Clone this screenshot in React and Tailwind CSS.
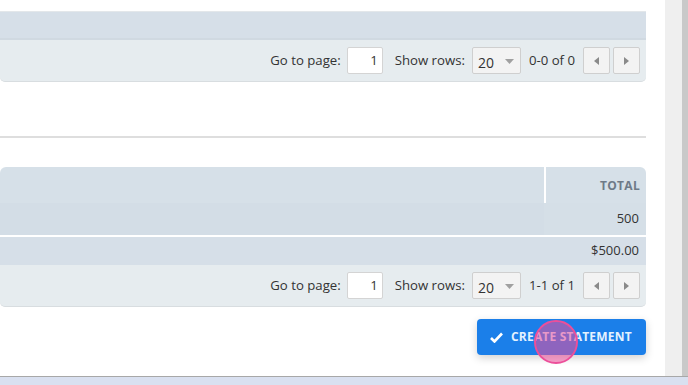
import React from 'react';

function Pager({ range }) {
  return (
    <div className="h-[42px] bg-[#e6ecef] rounded-b-[5px] border-b border-[#d8dde0] flex items-center justify-end pr-[6px] text-[13.2px] text-[#333]">
      <span className="mr-[6px]">Go to page:</span>
      <div className="w-[36px] h-[27px] bg-white border border-[#d4d4d4] rounded-[2px] flex items-center justify-end pr-[4px]">1</div>
      <span className="ml-[12px] mr-[7px]">Show rows:</span>
      <div className="w-[49px] h-[27px] bg-[#f3f3f3] border border-[#cfcfcf] rounded-[2px] flex items-center pl-[5px] pt-[3px] text-[14px]">
        20
        <svg className="ml-auto mr-[6px] -mt-[2px]" width="9" height="5" viewBox="0 0 9 5"><path d="M0 0h9L4.5 5z" fill="#a0a0a0" /></svg>
      </div>
      <span className="ml-[8px] mr-[8px]">{range}</span>
      <div className="w-[27px] h-[27px] bg-[#f3f3f3] border border-[#cfcfcf] rounded-[2px] flex items-center justify-center">
        <svg width="5" height="8" viewBox="0 0 5 8"><path d="M5 0v8L0 4z" fill="#8a8a8a" /></svg>
      </div>
      <div className="ml-[3px] w-[27px] h-[27px] bg-[#f3f3f3] border border-[#cfcfcf] rounded-[2px] flex items-center justify-center">
        <svg width="5" height="8" viewBox="0 0 5 8"><path d="M0 0v8l5-4z" fill="#8a8a8a" /></svg>
      </div>
    </div>
  );
}

export default function App() {
  return (
    <div className="w-[688px] h-[385px] bg-white flex flex-col overflow-hidden" style={{ fontFamily: '"Open Sans", "Liberation Sans", sans-serif' }}>
      <div className="flex flex-1">
        <div className="w-[646px] flex flex-col">
          {/* first table, bottom part */}
          <div className="h-[12px] border-b border-[#e3e7ea]" />
          <div className="h-[28px] bg-[#d6dfe8] border-b-[2px] border-[#d0d9e1]" />
          <Pager range="0-0 of 0" />

          <div className="h-[56px] border-b-[2px] border-[#dedede]" />
          <div className="h-[29px]" />

          {/* second table */}
          <div className="rounded-t-[6px] overflow-hidden">
            <div className="h-[36px] bg-[#d6e0e8] flex">
              <div className="flex-1" />
              <div className="w-[2px] bg-white" />
              <div className="w-[100px] flex items-end justify-end pb-[8px] pr-[6px] text-[12px] font-bold text-[#6e7a87] tracking-[0.3px]">TOTAL</div>
            </div>
            <div className="h-[32px] bg-[#d3dde6] flex">
              <div className="flex-1" />
              <div className="w-[102px] bg-[#d5dfe7] flex items-center justify-end pr-[7px] text-[13px] text-[#333]">500</div>
            </div>
          </div>
          <div className="h-[2px] bg-white" />
          <div className="h-[28px] bg-[#d6dfe8] flex items-center justify-end pr-[7px] text-[13px] text-[#333]">$500.00</div>
          <Pager range="1-1 of 1" />

          <div className="flex justify-end mt-[12px]">
            <div className="relative">
              <button className="w-[169px] h-[36px] bg-[#1b7fe9] rounded-[4px] shadow-[0_3px_8px_rgba(0,0,0,0.18)] flex items-center pl-[13px] text-white text-[12px] font-bold tracking-[0.2px]">
                <svg width="13" height="11" viewBox="0 0 13 11" className="mr-[8px]"><path d="M1 6l3.5 3.5L12 1.5" stroke="white" strokeWidth="2.6" fill="none" /></svg>
                <span className="text-[#e4f2ff]">CREATE STATEMENT</span>
              </button>
              <div className="absolute left-[57px] top-[1px] w-[44px] h-[44px] rounded-full border-[2px] border-[#ec4f9a] bg-[rgba(236,79,154,0.55)]" />
            </div>
          </div>
        </div>
        <div className="w-[19px]" />
        <div className="w-[23px] flex">
          <div className="w-[17px] bg-[#efefef]" />
          <div className="w-[6px] bg-[#c9c9c9]" />
        </div>
      </div>
      <div className="h-[9px] bg-[#d9e0f0] border-t border-[#a8a8a8]" />
    </div>
  );
}
